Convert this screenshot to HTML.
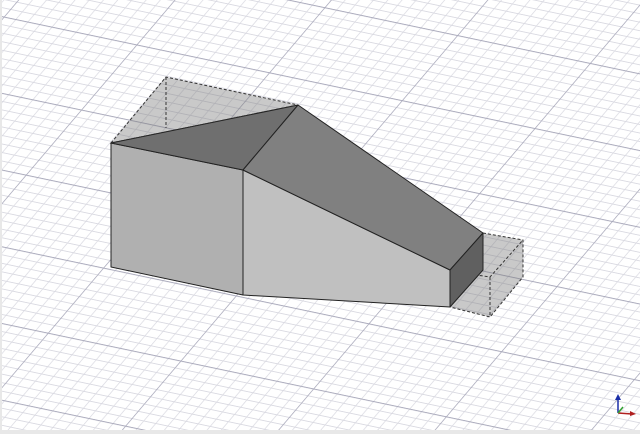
<!DOCTYPE html>
<html><head><style>html,body{margin:0;padding:0;background:#fff;overflow:hidden}svg{display:block}</style></head>
<body>
<svg width="640" height="434" viewBox="0 0 640 434" xmlns="http://www.w3.org/2000/svg">
<defs>
<pattern id="g" patternUnits="userSpaceOnUse" width="132.7" height="65.1" patternTransform="matrix(1 0.21 -0.85 1 269.5 72.3)">
<path d="M12.06 0V65.1M24.13 0V65.1M36.19 0V65.1M48.25 0V65.1M60.32 0V65.1M72.38 0V65.1M84.45 0V65.1M96.51 0V65.1M108.57 0V65.1M120.64 0V65.1M0 7.23H132.7M0 14.47H132.7M0 21.7H132.7M0 28.93H132.7M0 36.17H132.7M0 43.4H132.7M0 50.63H132.7M0 57.87H132.7" stroke="#d9d9e1" stroke-width="0.8" fill="none"/>
<path d="M0.4 0V65.1M0 0.4H132.7" stroke="#a9a9bb" stroke-width="0.9" fill="none"/>
</pattern>
</defs>
<rect width="640" height="434" fill="#e8e8e8"/>
<rect x="2" y="0" width="638" height="430" fill="#fff"/>
<rect x="2" y="0" width="638" height="430" fill="url(#g)"/>
<g fill="rgba(120,120,120,0.4)" stroke="#333" stroke-width="1" stroke-dasharray="3,2">
<polygon points="111,143 166,77 298,105"/>
<line x1="166" y1="77" x2="166" y2="128"/>
<polygon points="483,233 523,240 523,277 490,317 450,307 450,270"/>
<polyline points="450,271 490,277 523,240" fill="none"/>
<line x1="490" y1="277" x2="490" y2="317"/>
</g>
<g stroke="#222" stroke-width="1" stroke-linejoin="round">
<polygon points="111,143 243,170 243,295 111,267" fill="#b0b0b0"/>
<polygon points="243,170 450,270 450,307 243,295" fill="#c0c0c0"/>
<polygon points="111,143 298,105 243,170" fill="#6f6f6f"/>
<polygon points="298,105 483,233 450,270 243,170" fill="#808080"/>
<polygon points="450,270 483,233 483,270 450,307" fill="#606060"/>
</g>
<g stroke-width="1.5">
<line x1="618" y1="413" x2="618" y2="398" stroke="#1a2ea8"/>
<polygon points="615,400 618,394 621,400" fill="#1a2ea8"/>
<line x1="618" y1="413" x2="632" y2="414" stroke="#b02020"/>
<polygon points="630,411 636,414 630,416" fill="#b02020"/>
<line x1="618" y1="413" x2="623" y2="407" stroke="#30a030"/>
</g>
</svg>
</body></html>
